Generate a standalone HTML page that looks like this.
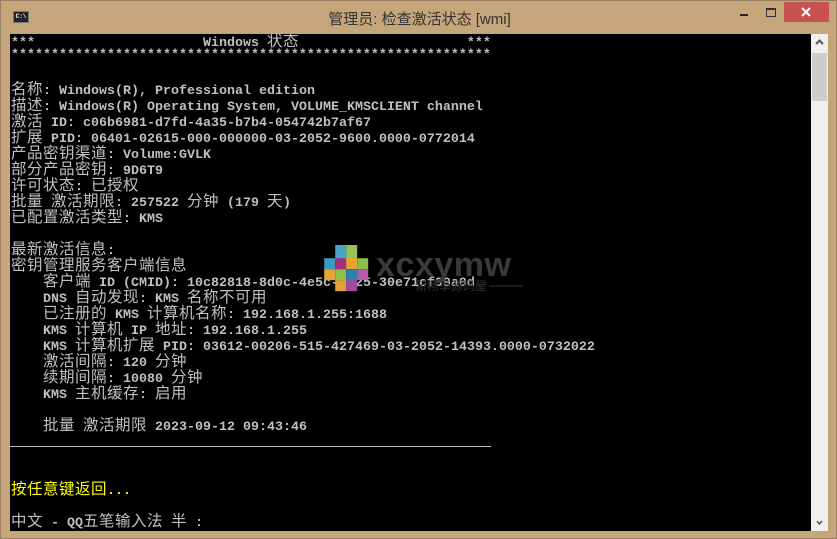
<!DOCTYPE html>
<html><head><meta charset="utf-8"><style>
html,body{margin:0;padding:0;width:837px;height:539px;overflow:hidden;background:#c4a67a;}
#win{position:absolute;left:0;top:0;width:835px;height:537px;border:1px solid #9a8060;background:#c4a67a;}
#title{position:absolute;left:0;top:7px;width:837px;text-align:center;font:15px "Liberation Sans","Noto Sans CJK SC",sans-serif;color:#333;}
#icon{position:absolute;left:12px;top:10px;width:14px;height:10px;background:#222;border:1px solid #777;font:bold 6px "Liberation Mono",monospace;color:#fff;line-height:10px;text-align:center;}
#close{position:absolute;left:783px;top:1px;width:45px;height:20px;background:#c75050;}
#min{position:absolute;left:739px;top:13px;width:8px;height:2px;background:#222;}
#max{position:absolute;left:765px;top:7px;width:8px;height:6px;border:1px solid #333;border-top-width:2px;}
#con{position:absolute;left:9px;top:33px;width:801px;height:497px;background:#000;overflow:hidden;}
#sb{position:absolute;left:810px;top:33px;width:17px;height:497px;background:#f0f0f0;}
#thumb{position:absolute;left:1px;top:19px;width:15px;height:48px;background:#cdcdcd;}
#t{position:absolute;left:1px;top:-2px;font:bold 13.33px "Liberation Mono",monospace;color:#c0c0c0;}
#t div{height:16px;line-height:16px;white-space:pre;overflow:visible;}
.c{font-family:"Noto Sans CJK SC",sans-serif;font-size:15.5px;font-weight:normal;letter-spacing:0.5px;line-height:16px;}
.y{color:#ffff00;}
#hr{position:absolute;left:-2px;top:412px;width:483px;height:1px;background:#c0c0c0;}
</style></head><body><div id="win">
<div id="icon">C:\</div>
<div id="title">管理员: 检查激活状态 [wmi]</div>
<div id="min"></div><div id="max"></div>
<div id="close"><svg width="45" height="20"><path d="M18 6l8 8M26 6l-8 8" stroke="#fff" stroke-width="2"/></svg></div>
<div id="con">
<div id="t">
<div>***                     Windows <span class="c">状态</span>                     ***</div>
<div>************************************************************</div>
<div></div>
<div><span class="c">名称</span>: Windows(R), Professional edition</div>
<div><span class="c">描述</span>: Windows(R) Operating System, VOLUME_KMSCLIENT channel</div>
<div><span class="c">激活</span> ID: c06b6981-d7fd-4a35-b7b4-054742b7af67</div>
<div><span class="c">扩展</span> PID: 06401-02615-000-000000-03-2052-9600.0000-0772014</div>
<div><span class="c">产品密钥渠道</span>: Volume:GVLK</div>
<div><span class="c">部分产品密钥</span>: 9D6T9</div>
<div><span class="c">许可状态</span>: <span class="c">已授权</span></div>
<div><span class="c">批量</span> <span class="c">激活期限</span>: 257522 <span class="c">分钟</span> (179 <span class="c">天</span>)</div>
<div><span class="c">已配置激活类型</span>: KMS</div>
<div></div>
<div><span class="c">最新激活信息</span>:</div>
<div><span class="c">密钥管理服务客户端信息</span></div>
<div>    <span class="c">客户端</span> ID (CMID): 10c82818-8d0c-4e5c-8d25-30e71cf99a0d</div>
<div>    DNS <span class="c">自动发现</span>: KMS <span class="c">名称不可用</span></div>
<div>    <span class="c">已注册的</span> KMS <span class="c">计算机名称</span>: 192.168.1.255:1688</div>
<div>    KMS <span class="c">计算机</span> IP <span class="c">地址</span>: 192.168.1.255</div>
<div>    KMS <span class="c">计算机扩展</span> PID: 03612-00206-515-427469-03-2052-14393.0000-0732022</div>
<div>    <span class="c">激活间隔</span>: 120 <span class="c">分钟</span></div>
<div>    <span class="c">续期间隔</span>: 10080 <span class="c">分钟</span></div>
<div>    KMS <span class="c">主机缓存</span>: <span class="c">启用</span></div>
<div></div>
<div>    <span class="c">批量</span> <span class="c">激活期限</span> 2023-09-12 09:43:46</div>
<div></div>
<div></div>
<div></div>
<div><span class="c y">按任意键返回</span><span class="y">...</span></div>
<div></div>
<div><span class="c">中文</span> - QQ<span class="c">五笔输入法</span> <span class="c">半</span> :</div>
</div>
<div id="hr"></div>
<svg style="position:absolute;left:311px;top:211px" width="210" height="52">
<g transform="translate(1,0) scale(1.1)">
<rect x="12" y="0" width="10" height="14" fill="#4aa3c8"/><rect x="22" y="0" width="10" height="14" fill="#96c45a"/>
<rect x="2" y="12" width="10" height="10" fill="#3c9ac4"/><rect x="12" y="12" width="10" height="10" fill="#a0307f"/><rect x="22" y="12" width="10" height="10" fill="#e7a32c"/><rect x="32" y="12" width="10" height="10" fill="#88c04a"/>
<rect x="2" y="22" width="10" height="10" fill="#e3a63a"/><rect x="12" y="22" width="10" height="10" fill="#8dc04a"/><rect x="22" y="22" width="10" height="10" fill="#2f7fb0"/><rect x="32" y="22" width="10" height="10" fill="#b75aa8"/>
<rect x="12" y="32" width="10" height="10" fill="#e0a035"/><rect x="22" y="32" width="10" height="10" fill="#a04aa0"/>
</g>
<text x="55" y="31" font-family="Liberation Sans,sans-serif" font-weight="bold" font-size="34" fill="#3a3a3a" textLength="135">xcxymw</text>
<text x="94" y="45" font-family="Noto Sans CJK SC,sans-serif" font-size="12" fill="#333">新畅享源码屋</text>
<line x1="168" y1="41" x2="202" y2="41" stroke="#333"/>
</svg>
</div>
<div id="sb"><svg width="17" height="17"><path d="M5 10l3.5-3.5L12 10" stroke="#555" stroke-width="2" fill="none"/></svg><div id="thumb"></div>
<svg style="position:absolute;left:0;top:480px" width="17" height="17"><path d="M6 7l2.5 3L11 7" stroke="#555" stroke-width="1.5" fill="none"/></svg></div>
</div></body></html>
